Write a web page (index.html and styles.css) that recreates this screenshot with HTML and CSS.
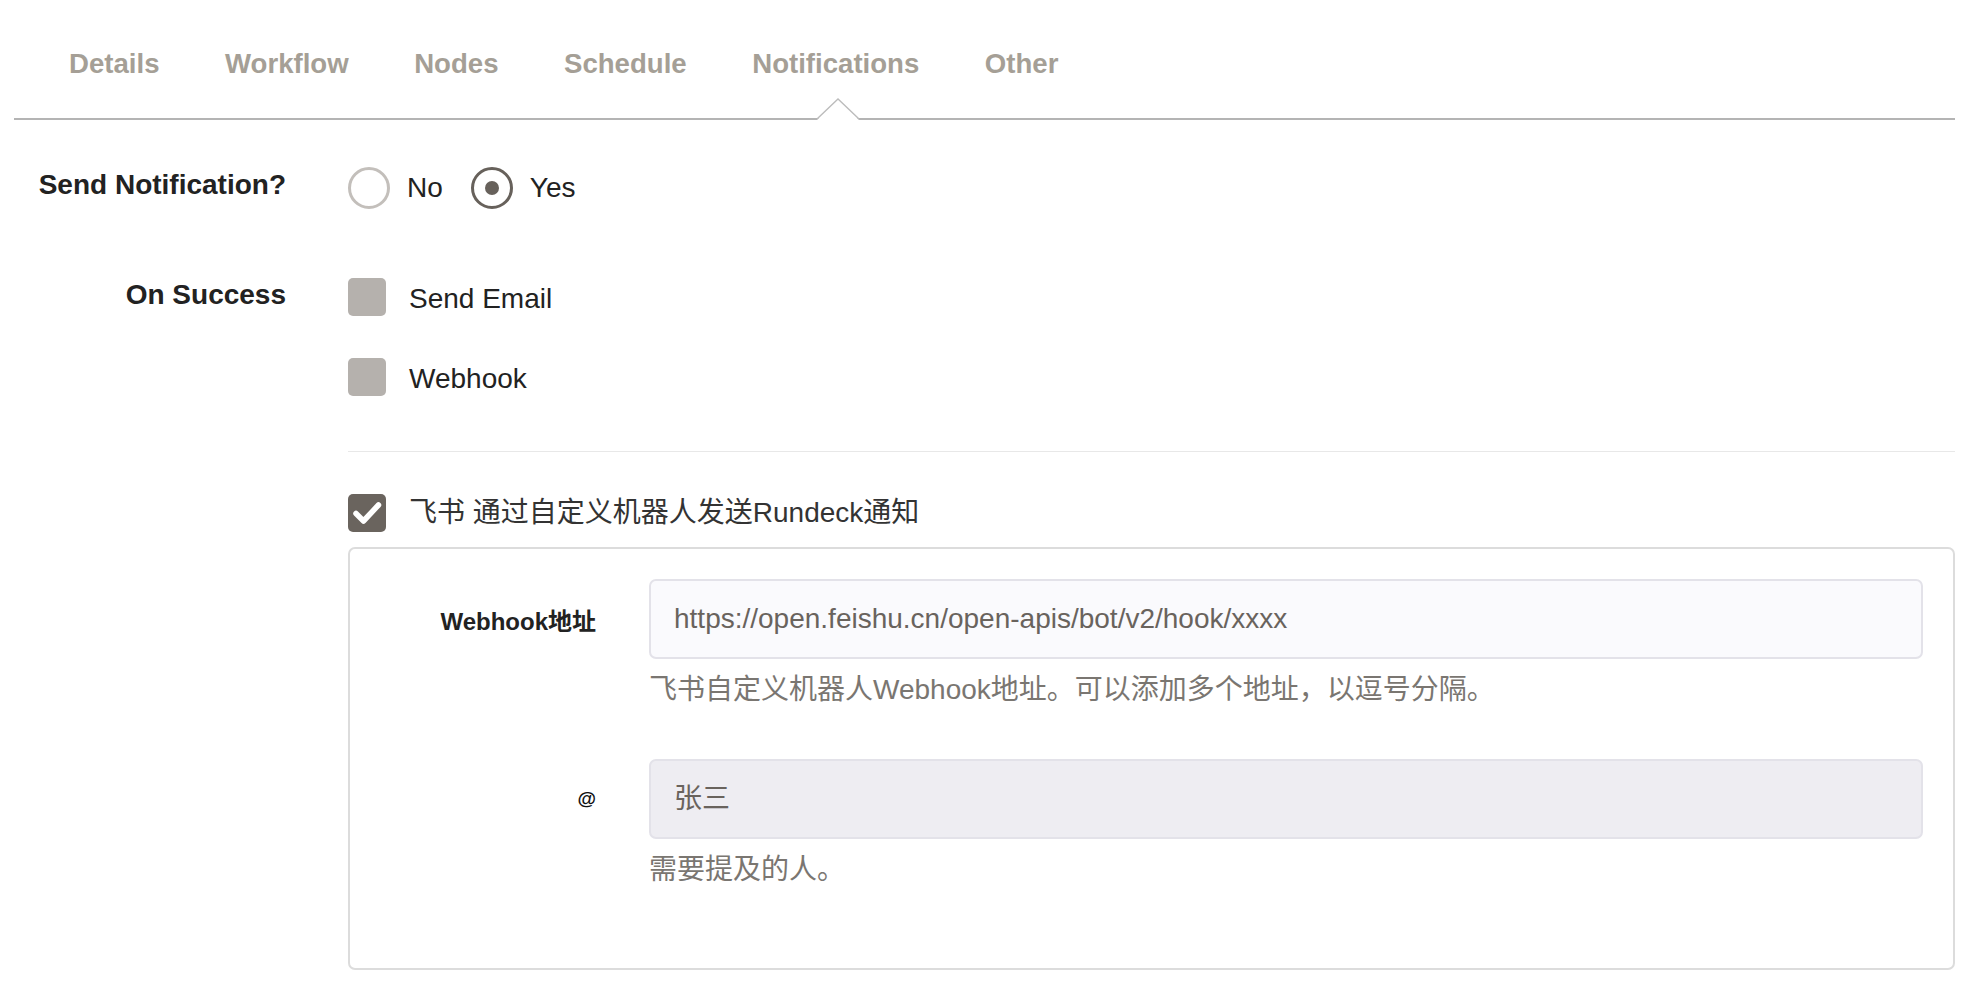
FILE: index.html
```html
<!DOCTYPE html>
<html lang="zh-CN">
<head>
<meta charset="utf-8">
<title>Notifications</title>
<link rel="stylesheet" href="styles.css">
</head>
<body>
<div class="page">
  <nav class="tabs">
    <a class="tab">Details</a>
    <a class="tab">Workflow</a>
    <a class="tab">Nodes</a>
    <a class="tab">Schedule</a>
    <a class="tab active">Notifications<svg class="caret" viewBox="0 0 42 22" width="42" height="22"><polygon points="0,22 21,1 42,22" fill="#fff"/><polyline points="0,21 21,1 42,21" fill="none" stroke="#bcbcbc" stroke-width="1.3"/></svg></a>
    <a class="tab">Other</a>
  </nav>

  <form class="form">
    <div class="row row-send">
      <div class="label">Send Notification?</div>
      <div class="controls radios">
        <label class="radio"><span class="radio-circle"></span><span>No</span></label>
        <label class="radio checked"><span class="radio-circle"><span class="radio-dot"></span></span><span>Yes</span></label>
      </div>
    </div>

    <div class="row row-success">
      <div class="label">On Success</div>
      <div class="controls">
        <label class="check"><span class="box"></span><span class="check-label">Send Email</span></label>
        <label class="check"><span class="box"></span><span class="check-label">Webhook</span></label>
        <hr class="sep">
        <label class="check checked"><span class="box"><svg viewBox="0 0 38 38" width="38" height="38"><path d="M8 19.5 L15.5 27 L30.5 11" fill="none" stroke="#fff" stroke-width="5.5" stroke-linecap="round" stroke-linejoin="round"/></svg></span><span class="check-text">飞书 通过自定义机器人发送Rundeck通知</span></label>
        <div class="panel">
          <div class="field">
            <div class="flabel">Webhook地址</div>
            <div class="fcontrol">
              <div class="input">https://open.feishu.cn/open-apis/bot/v2/hook/xxxx</div>
              <div class="help">飞书自定义机器人Webhook地址。可以添加多个地址，以逗号分隔。</div>
            </div>
          </div>
          <div class="field">
            <div class="flabel flabel-at">@</div>
            <div class="fcontrol">
              <div class="input filled">张三</div>
              <div class="help">需要提及的人。</div>
            </div>
          </div>
        </div>
      </div>
    </div>
  </form>
</div>
</body>
</html>
```

FILE: styles.css
```css
* {
  box-sizing: border-box;
}

body {
  margin: 0;
  background: #ffffff;
  font-family: "Liberation Sans", "Noto Sans CJK SC", sans-serif;
  color: #222222;
}

.page {
  padding: 0 19px 0 14px;
}

/* Tabs */
.tabs {
  display: flex;
  gap: 65.5px;
  padding-left: 55px;
  border-bottom: 2px solid #b4b4b4;
}

.tab {
  position: relative;
  padding: 48px 0 38px;
  font-size: 27.6px;
  line-height: 32px;
  font-weight: 700;
  color: #a59f96;
}

.caret {
  position: absolute;
  left: 50%;
  bottom: -2px;
  margin-left: -19px;
  display: block;
}

/* Form rows */
.row {
  display: flex;
}

.row-send {
  margin-top: 47px;
}

.row-success {
  margin-top: 69px;
}

.label {
  width: 272px;
  flex: none;
  margin-right: 62px;
  padding-top: 2px;
  text-align: right;
  font-size: 28px;
  line-height: 32px;
  font-weight: 700;
  color: #222222;
}

.row-success .label {
  padding-top: 1px;
}

.controls {
  flex: 1;
  min-width: 0;
}

/* Radios */
.radios {
  display: flex;
  gap: 28px;
}

.radio {
  display: flex;
  align-items: center;
  gap: 17px;
  height: 42px;
  font-size: 28px;
  line-height: 32px;
}

.radio-circle {
  width: 42px;
  height: 42px;
  flex: none;
  border-radius: 50%;
  border: 3px solid #c3bfbb;
  background: #ffffff;
  display: flex;
  align-items: center;
  justify-content: center;
}

.radio.checked .radio-circle {
  border: 3.5px solid #67615b;
}

.radio-dot {
  width: 14px;
  height: 14px;
  border-radius: 50%;
  background: #67615b;
}

/* Checkboxes */
.check {
  display: flex;
  align-items: center;
  gap: 23px;
  height: 38px;
  font-size: 28px;
  line-height: 32px;
  color: #222222;
}

.check-label {
  padding-top: 4px;
}

.check + .check {
  margin-top: 42px;
}

.box {
  width: 38px;
  height: 38px;
  flex: none;
  border-radius: 5px;
  background: #b5b1ad;
}

.box svg {
  display: block;
}

.check.checked .box {
  background: #6a645e;
}

.check-text {
  color: #333333;
}

.sep {
  margin: 55px 0 0;
  height: 0;
  border: 0;
  border-top: 1px solid #e8e8e8;
}

.sep + .check {
  margin-top: 42px;
}

/* Plugin panel */
.panel {
  margin-top: 15px;
  border: 2px solid #dcdcdc;
  border-radius: 7px;
  padding: 30px 30px 29px 0;
}

.field {
  display: flex;
  margin-bottom: 53px;
}

.flabel {
  width: 246px;
  flex: none;
  margin-right: 53px;
  height: 80px;
  display: flex;
  align-items: center;
  justify-content: flex-end;
  font-size: 24px;
  font-weight: 700;
  color: #222222;
}

.flabel-at {
  font-size: 19px;
  color: #111111;
}

.fcontrol {
  flex: 1;
  min-width: 0;
}

.input {
  height: 80px;
  border: 2px solid #e3e2e9;
  border-radius: 7px;
  background: #fafafd;
  padding: 0 23px;
  display: flex;
  align-items: center;
  font-size: 28px;
  line-height: 32px;
  color: #69635d;
}

.input.filled {
  background: #eeedf2;
}

.help {
  margin-top: 15px;
  font-size: 28px;
  line-height: 32px;
  color: #7a7671;
}
```
